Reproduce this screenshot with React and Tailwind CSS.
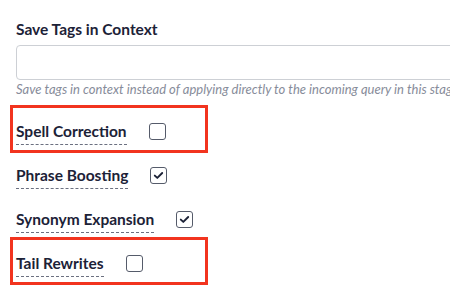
import React from "react";

function Box({ checked }) {
  return (
    <div className="mb-[2px] flex h-[17px] w-[17px] shrink-0 items-center justify-center rounded-[3px] border-[1.5px] border-[#555b6a] bg-white">
      {checked && (
        <svg width="11" height="9" viewBox="0 0 11 9" fill="none">
          <path d="M1.8 4.6 L4.3 6.9 L9.2 2" stroke="#1c2237" strokeWidth="1.9" strokeLinecap="round" strokeLinejoin="round" />
        </svg>
      )}
    </div>
  );
}

function Row({ label, checked, boxed }) {
  return (
    <div className="relative flex items-center gap-[22px]">
      <span className="border-b border-dashed border-[#6b7080] pb-[2px] text-[15.5px] font-bold leading-[22px] text-[#1c2237]">
        {label}
      </span>
      <Box checked={checked} />
      {boxed && (
        <div className="pointer-events-none absolute left-[-6px] top-[-15px] h-[48px] w-[198px] border-[3px] border-[#f2341f]" />
      )}
    </div>
  );
}

export default function App() {
  return (
    <div className="h-[297px] w-[450px] overflow-hidden bg-white" style={{ fontFamily: "Lato, 'Open Sans', sans-serif" }}>
      <div className="w-[640px] pl-[16px] pt-[18px]">
        <div className="text-[15.5px] font-bold leading-[22px] text-[#1c2237]">Save Tags in Context</div>
        <div className="mt-[5px] h-[35px] w-full rounded-[4px] border border-[#cdd0d5] bg-white" />
        <div className="mt-[1px] whitespace-nowrap text-[13px] italic leading-[16px] text-[#878c9a]">
          Save tags in context instead of applying directly to the incoming query in this stage
        </div>
        <div className="mt-[23px] flex flex-col gap-[19px]">
          <Row label="Spell Correction" checked={false} boxed />
          <Row label="Phrase Boosting" checked />
          <Row label="Synonym Expansion" checked />
          <Row label="Tail Rewrites" checked={false} boxed />
        </div>
      </div>
    </div>
  );
}
